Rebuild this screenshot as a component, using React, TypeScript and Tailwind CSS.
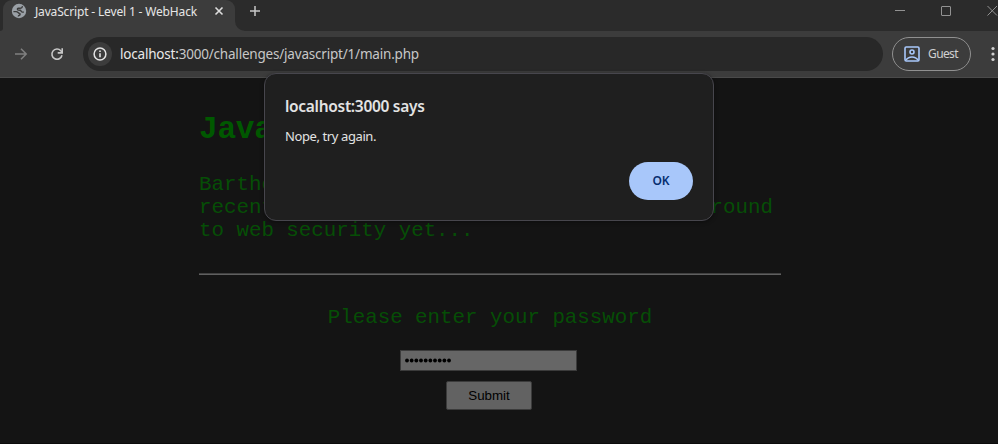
import React from "react";

const UI = "font-['Noto_Sans','Open_Sans',sans-serif]";
const MONO = "font-['Liberation_Mono','Courier_New',monospace]";

function Globe() {
  return (
    <svg className="mt-[3px] block h-4 w-4 shrink-0" viewBox="0 0 16 16">
      <circle cx="8" cy="8" r="7.2" fill="#9aa0a6" />
      <path
        d="M11.300 3.200c.2 1.500-1 2-2.300 2H7.200c-1 0-1.200 1.700.1 1.900l1.800.2c1 .1 1 1.600 2 1.700l1.800.1M2.400 8.600h2.800c1.700 0 1.900 1.700 3.300 1.900.9.200.8 1.500-.2 1.700-1 .2-1 .8-1 1.200"
        fill="none"
        stroke="#3c3c3c"
        strokeWidth="1.4"
      />
    </svg>
  );
}

function TabStrip() {
  return (
    <div className="flex h-[31px] overflow-hidden bg-[#2b2b2b]">
      <div className="flex h-[31px] w-[3px] bg-[#3c3c3c]">
        <div className="h-[31px] w-[3px] rounded-br-[8px] bg-[#2b2b2b]" />
      </div>
      <div className="flex h-[31px] w-[232px] rounded-t-[9px] bg-[#3c3c3c] pl-2">
        <Globe />
        <span className={`${UI} ml-2 mt-[3px] w-[179px] whitespace-nowrap text-[12px] leading-[17px] tracking-[-0.16px] text-[#e6e6e6]`}>
          JavaScript - Level 1 - WebHack
        </span>
        <svg className="mt-[6px] block h-[10px] w-[10px] shrink-0" viewBox="0 0 10 10">
          <path d="M1.5 1.5 8.5 8.5M8.5 1.5 1.5 8.5" stroke="#dedede" strokeWidth="1.6" />
        </svg>
      </div>
      <div className="h-[31px] w-3 bg-[#3c3c3c]">
        <div className="h-[31px] w-3 rounded-bl-[10px] bg-[#2b2b2b]" />
      </div>
      <svg className="ml-[2px] mt-[5px] block h-3 w-3 shrink-0" viewBox="0 0 12 12">
        <path d="M6 1v10M1 6h10" stroke="#c7c7c7" strokeWidth="1.5" />
      </svg>
      <div className="flex flex-1 justify-end">
        <svg className="block h-[22px] w-[110px]" viewBox="0 0 110 22" fill="none" stroke="#929292">
          <path d="M7 10.5h10" />
          <rect x="53.5" y="6.5" width="9" height="9" rx="0.5" />
          <path d="M99.5 6 109 15.5M109 6 99.5 15.5" />
        </svg>
      </div>
    </div>
  );
}

function Toolbar() {
  return (
    <div className="flex h-[47px] items-start border-b border-[#4a4a4a] bg-[#3c3c3c]">
      <svg className="ml-[14px] mt-4 block h-[14px] w-[14px] shrink-0" viewBox="0 0 14 14" fill="none" stroke="#808080" strokeWidth="1.5">
        <path d="M1 7h11M7 1.8 12.2 7 7 12.2" />
      </svg>
      <svg className="ml-[22px] mt-[16px] block h-[14px] w-[14px] shrink-0" viewBox="0 0 14 14">
        <path d="M12 8.3A5.100 5.100 0 1 1 10.8 3.700L12 5" fill="none" stroke="#c7c7c7" strokeWidth="1.6" />
        <path d="M13 1.200v5.500H7.700V5.100h3.700V1.200Z" fill="#c7c7c7" />
      </svg>
      <div className="ml-[19px] mt-[6px] flex h-[34px] w-[800px] items-center rounded-full bg-[#282828] pl-[5px]">
        <span className="flex h-6 w-6 items-center justify-center rounded-full bg-[#3c3c3c]">
          <svg className="block h-[14px] w-[14px]" viewBox="0 0 14 14">
            <circle cx="7" cy="7" r="5.900" fill="none" stroke="#e3e3e3" strokeWidth="1.5" />
            <path d="M6.200 6.200h1.600v4H6.200ZM6.200 3.600h1.600V5H6.200Z" fill="#e3e3e3" />
          </svg>
        </span>
        <span className={`${UI} ml-2 whitespace-nowrap text-[13.5px] leading-5 tracking-[-0.2px] text-[#c7c7c7]`}>
          <span className="text-[#e8e8e8]">localhost:</span>3000/challenges/javascript/1/main.php
        </span>
      </div>
      <div className="ml-[9px] mt-[6px] flex h-[34px] w-[79px] items-center rounded-full border border-[#909090] pl-[11px]">
        <svg className="block h-4 w-4 shrink-0" viewBox="0 0 16 16" fill="none" stroke="#a8c7fa" strokeWidth="1.6">
          <rect x="1" y="1" width="14" height="14" rx="1.2" />
          <circle cx="8" cy="6" r="2" />
          <path d="M2 14.2c1.2-2 3.400-3.200 6-3.200s4.800 1.200 6 3.200" />
        </svg>
        <span className={`${UI} ml-2 text-[12px] leading-4 tracking-[-0.6px] text-[#d0d0d0]`}>Guest</span>
      </div>
      <svg className="ml-[20px] mt-[15px] block h-4 w-1 shrink-0" viewBox="0 0 4 16" fill="#d0d0d0">
        <circle cx="2" cy="2.500" r="1.600" />
        <circle cx="2" cy="8" r="1.600" />
        <circle cx="2" cy="13.500" r="1.600" />
      </svg>
    </div>
  );
}

function Page() {
  return (
    <main className={`${MONO} h-[366px] border-b border-[#0b0b0b] bg-[#141414] pl-[199px] text-[20.8px] leading-[23px] text-[#064e06]`}>
      <div className="flex w-[582px] flex-col pt-[34px]">
        <h1 className="h-9 whitespace-nowrap text-[31.2px] font-bold leading-9 tracking-[-0.3px] text-[#005800]">Java</h1>
        <div className="mt-[25px] whitespace-nowrap">
          <p>Bartho</p>
          <p className="flex justify-between pr-2">
            <span>recent</span>
            <span>round</span>
          </p>
          <p>to web security yet...</p>
        </div>
        <hr className="mt-[31px] h-[2px] border-b border-t border-b-[#606060] border-t-[#414141]" />
        <form className="flex flex-col items-center pt-[31px]" onSubmit={(e) => e.preventDefault()}>
          <label htmlFor="password">Please enter your password</label>
          <div id="password" className="mr-[3px] mt-[21px] flex h-[21px] w-[177px] items-center border border-[#3b3b3b] bg-[#666666] pl-[3px]">
            <svg className="block h-[7px] w-12" viewBox="0 0 48 7">
              {Array.from({ length: 10 }, (_, i) => (
                <circle key={i} cx={3 + i * 4.67} cy="3.5" r="1.9" />
              ))}
            </svg>
          </div>
          <button className="mr-[2px] mt-[10px] h-[29px] w-[86px] rounded-[2px] border border-[#3b3b3b] bg-[#626262] font-['Liberation_Sans',Arial,sans-serif] text-[13.33px] leading-4 text-black">
            Submit
          </button>
        </form>
      </div>
    </main>
  );
}

function AlertDialog() {
  return (
    <div
      role="alertdialog"
      className={`${UI} absolute left-[264px] top-[73px] flex h-[148px] w-[450px] flex-col rounded-[12px] border border-[#47464d] bg-[#1f1f1f] px-5 pt-[21px] shadow-[0_1px_4px_rgba(0,0,0,0.4)]`}
    >
      <h2 className="whitespace-nowrap text-[15.5px] font-semibold leading-[22px] tracking-[-0.3px] text-[#e3e3e3]">localhost:3000 says</h2>
      <p className="mt-[9px] text-[13px] leading-5 tracking-[-0.4px] text-[#e3e3e3]">Nope, try again.</p>
      <button className="mt-4 h-[38px] w-16 self-end rounded-full bg-[#a8c7fa] text-[12px] font-semibold text-[#062e6f]">OK</button>
    </div>
  );
}

export default function App() {
  return (
    <div className="relative h-[444px] w-[998px] overflow-hidden bg-[#141414]">
      <TabStrip />
      <Toolbar />
      <Page />
      <AlertDialog />
    </div>
  );
}
